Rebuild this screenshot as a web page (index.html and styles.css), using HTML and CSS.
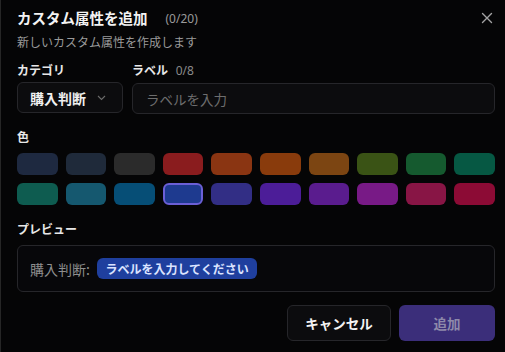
FILE: index.html
```html
<!DOCTYPE html>
<html lang="ja">
<head>
<meta charset="utf-8">
<link rel="stylesheet" href="styles.css">
</head>
<body>
<div class="dialog">
  <div class="header">
    <div class="title-row">
      <h1 class="title">カスタム属性を追加</h1>
      <span class="count">(0/20)</span>
    </div>
    <button class="close" aria-label="close">
      <svg width="12" height="12" viewBox="0 0 12 12"><path d="M1.5 1.5L10.5 10.5M10.5 1.5L1.5 10.5" stroke="#a3a3a3" stroke-width="1.4" stroke-linecap="round"/></svg>
    </button>
  </div>
  <p class="subtitle">新しいカスタム属性を作成します</p>

  <div class="fields">
    <div class="field cat">
      <div class="label">カテゴリ</div>
      <div class="select">
        <span>購入判断</span>
        <svg width="9" height="6" viewBox="0 0 9 6"><path d="M1 1L4.5 4.5L8 1" fill="none" stroke="#6b6b6b" stroke-width="1.1"/></svg>
      </div>
    </div>
    <div class="field lab">
      <div class="label">ラベル <span class="small">0/8</span></div>
      <div class="input">ラベルを入力</div>
    </div>
  </div>

  <div class="label sec">色</div>
  <div class="swatches">
    <div class="sw" style="background:#1e2940"></div>
    <div class="sw" style="background:#1f2a3a"></div>
    <div class="sw" style="background:#2b2b2b"></div>
    <div class="sw" style="background:#8a1c1e"></div>
    <div class="sw" style="background:#8a3512"></div>
    <div class="sw" style="background:#893b0c"></div>
    <div class="sw" style="background:#7c4512"></div>
    <div class="sw" style="background:#3a5315"></div>
    <div class="sw" style="background:#155a2f"></div>
    <div class="sw" style="background:#065843"></div>
    <div class="sw" style="background:#0e5c50"></div>
    <div class="sw" style="background:#15586f"></div>
    <div class="sw" style="background:#064e76"></div>
    <div class="sw selected" style="background:#1e3a8f"></div>
    <div class="sw" style="background:#322e85"></div>
    <div class="sw" style="background:#4c1d98"></div>
    <div class="sw" style="background:#5a1c8e"></div>
    <div class="sw" style="background:#781a86"></div>
    <div class="sw" style="background:#881545"></div>
    <div class="sw" style="background:#8c0b35"></div>
  </div>

  <div class="label sec2">プレビュー</div>
  <div class="preview">
    <span class="pv-cat">購入判断:</span>
    <span class="badge">ラベルを入力してください</span>
  </div>

  <div class="actions">
    <button class="btn cancel">キャンセル</button>
    <button class="btn add">追加</button>
  </div>
</div>
</body>
</html>
```
FILE: styles.css
```css
html, body {
  margin: 0;
  padding: 0;
  background: #050506;
  overflow: hidden;
}
body {
  font-family: "Noto Sans CJK JP", "Noto Sans", sans-serif;
  color: #ededed;
}
.dialog {
  box-sizing: border-box;
  width: 512px;
  height: 352px;
  border-left: 1px solid #262626;
  padding: 7px 17px 0 16px;
}
.header {
  display: flex;
  justify-content: space-between;
  align-items: center;
  height: 22px;
}
.title-row {
  display: flex;
  align-items: center;
}
.title {
  margin: 0;
  font-size: 14.5px;
  line-height: 22px;
  font-weight: 700;
  color: #f3f3f3;
}
.count {
  margin-left: 18px;
  font-size: 12px;
  color: #9a9a9a;
  font-family: "Noto Sans", sans-serif;
}
.close {
  background: none;
  border: 0;
  padding: 0;
  width: 12px;
  height: 12px;
  margin-right: 2px;
  display: flex;
}
.subtitle {
  margin: 4px 0 0;
  font-size: 12px;
  line-height: 18px;
  color: #9a9a9a;
}
.fields {
  display: flex;
  gap: 9px;
  margin-top: 11px;
}
.field.cat { width: 106px; flex: none; }
.field.lab { flex: 1; }
.label {
  font-size: 12px;
  line-height: 16px;
  font-weight: 700;
  color: #e8e8e8;
}
.small {
  font-weight: 400;
  color: #8a8a8a;
  margin-left: 5px;
  font-family: "Noto Sans", sans-serif;
}
.select, .input {
  box-sizing: border-box;
  height: 31px;
  margin-top: 4px;
  border: 1px solid #26262a;
  border-radius: 6px;
  background: #0c0c0e;
  display: flex;
  align-items: center;
}
.select {
  padding: 0 16px 0 12px;
  justify-content: space-between;
  font-size: 14px;
  font-weight: 700;
  color: #f0f0f0;
}
.input {
  padding: 0 13px;
  font-size: 13.5px;
  color: #6e6e6e;
}
.sec { margin-top: 15px; }
.swatches {
  display: grid;
  grid-template-columns: repeat(10, 1fr);
  column-gap: 8px;
  row-gap: 8px;
  margin-top: 8px;
}
.sw {
  height: 22px;
  border-radius: 6px;
  box-sizing: border-box;
}
.sw.selected {
  border: 2px solid #6b5fd6;
}
.sec2 { margin-top: 16px; }
.preview {
  box-sizing: border-box;
  margin-top: 8px;
  height: 47px;
  border: 1px solid #26262a;
  border-radius: 6px;
  background: #07070a;
  display: flex;
  align-items: center;
  padding: 0 12px;
}
.pv-cat {
  font-size: 14px;
  color: #8e8e8e;
}
.badge {
  margin-left: 7px;
  background: #1f3f9e;
  color: #dbe3ff;
  font-size: 12px;
  font-weight: 700;
  line-height: 21px;
  padding: 0 8.5px;
  border-radius: 6px;
}
.actions {
  display: flex;
  justify-content: flex-end;
  gap: 8px;
  margin-top: 13px;
}
.btn {
  box-sizing: border-box;
  height: 36px;
  border-radius: 6px;
  font-family: "Noto Sans CJK JP", sans-serif;
  font-size: 13.5px;
  font-weight: 700;
}
.cancel {
  width: 104px;
  background: #0c0c0e;
  border: 1px solid #26262a;
  color: #f3f3f3;
}
.add {
  width: 96px;
  background: #3b2e7a;
  border: 0;
  color: #8e89aa;
}
```
